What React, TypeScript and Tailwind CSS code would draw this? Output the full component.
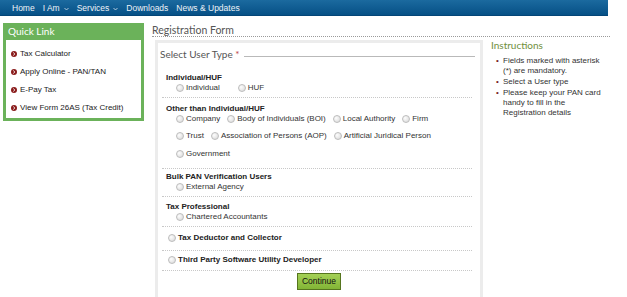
import React from "react";

const Radio = () => (
  <span className="inline-block w-[8px] h-[8px] shrink-0 rounded-full border border-[#bdbdbd] bg-[radial-gradient(circle_at_35%_35%,#fdfdfd,#d6d6d6)]" />
);

const Opt = ({ label, className }: { label: string; className?: string }) => (
  <span className={"flex items-center gap-[2px] " + (className || "")}>
    <Radio />
    <span>{label}</span>
  </span>
);

const Caret = () => (
  <svg width="5" height="4" viewBox="0 0 5 4" className="mt-[2px]">
    <path d="M0.5 1 L2.5 3 L4.5 1" stroke="#d8e4ef" strokeWidth="0.8" fill="none" />
  </svg>
);

const QBullet = () => (
  <svg width="6" height="6" viewBox="0 0 6 6" className="shrink-0">
    <circle cx="3" cy="3" r="3" fill="#8a1c1c" />
    <path d="M2.3 1.6 L3.8 3 L2.3 4.4" stroke="#fff" strokeWidth="1" fill="none" />
  </svg>
);

export default function App() {
  const sans = { fontFamily: '"Liberation Sans", Arial, sans-serif' };
  return (
    <div className="w-[627px] h-[297px] overflow-hidden bg-white text-[#333]" style={sans}>
      {/* nav */}
      <div className="w-[608px] h-[16px] bg-[linear-gradient(#1b6a9f,#065086)] border-b border-[#044577] flex items-center pl-[12px] gap-[8px] text-[8.5px] leading-[10px] text-[#eef3f8]">
        <span>Home</span>
        <span className="flex items-center gap-[4px]">I Am<Caret /></span>
        <span className="flex items-center gap-[4px]">Services<Caret /></span>
        <span>Downloads</span>
        <span>News &amp; Updates</span>
      </div>

      <div className="flex pl-[3px] gap-[8px]">
        {/* quick links */}
        <div className="mt-[7px] w-[141px] h-[98px] border-[3px] border-t-0 border-[#6bb25a] flex flex-col">
          <div className="h-[17px] bg-[#6bb25a] -mx-[3px] px-[5px] flex items-center text-white text-[10px]" style={{ fontFamily: "Lato, sans-serif" }}>
            Quick Link
          </div>
          <div className="pt-[5px] flex flex-col text-[8px] text-[#222]">
            {["Tax Calculator", "Apply Online - PAN/TAN", "E-Pay Tax", "View Form 26AS (Tax Credit)"].map((t) => (
              <div key={t} className="h-[18px] flex items-center gap-[3px] pl-[5px]">
                <QBullet />
                <span>{t}</span>
              </div>
            ))}
          </div>
        </div>

        {/* main */}
        <div className="w-[458px] flex flex-col">
          <div className="mt-[8px] h-[13px] border-b border-dotted border-[#9a9a9a] text-[10.5px] leading-[12px] text-[#555]" style={{ fontFamily: "Lato, sans-serif" }}>
            Registration Form
          </div>
          <div className="flex mt-[3px] gap-[8px]">
            {/* panel */}
            <div className="ml-[3px] w-[328px] h-[270px] border-[3px] border-[#ececec] border-b-0 flex flex-col">
              <div className="flex items-end pl-[2px] pt-[5px] pr-[5px] gap-[4px]">
                <span className="text-[10px] leading-[12px] text-[#555]" style={{ fontFamily: "Lato, sans-serif" }}>
                  Select User Type <span className="text-[#b44]">*</span>
                </span>
                <span className="flex-1 border-b border-[#b9b9b9] mb-[3px]" />
              </div>

              <div className="ml-[4px] mr-[8px] border-b border-dotted border-[#c8c8c8] pt-[13px] pb-[4px]">
                <div className="pl-[4px] font-bold text-[8px] leading-[10px] text-[#222]">Individual/HUF</div>
                <div className="pl-[14px] flex items-center text-[8px] leading-[10px]">
                  <Opt label="Individual" />
                  <Opt label="HUF" className="ml-[18px]" />
                </div>
              </div>

              <div className="ml-[4px] mr-[8px] border-b border-dotted border-[#c8c8c8] pt-[6px] pb-[9px]">
                <div className="pl-[4px] font-bold text-[8px] leading-[10px] text-[#222]">Other than Individual/HUF</div>
                <div className="pl-[14px] flex items-center gap-[7px] text-[8px] leading-[10px]">
                  <Opt label="Company" />
                  <Opt label="Body of Individuals (BOI)" />
                  <Opt label="Local Authority" />
                  <Opt label="Firm" />
                </div>
                <div className="pl-[14px] mt-[7px] flex items-center gap-[7px] text-[8px] leading-[10px]">
                  <Opt label="Trust" />
                  <Opt label="Association of Persons (AOP)" />
                  <Opt label="Artificial Juridical Person" />
                </div>
                <div className="pl-[14px] mt-[8px] flex items-center text-[8px] leading-[10px]">
                  <Opt label="Government" />
                </div>
              </div>

              <div className="ml-[4px] mr-[8px] border-b border-dotted border-[#c8c8c8] pt-[3px] pb-[4px]">
                <div className="pl-[4px] font-bold text-[8px] leading-[10px] text-[#222]">Bulk PAN Verification Users</div>
                <div className="pl-[14px] flex items-center text-[8px] leading-[10px]">
                  <Opt label="External Agency" />
                </div>
              </div>

              <div className="ml-[4px] mr-[8px] border-b border-dotted border-[#c8c8c8] pt-[5px] pb-[4px]">
                <div className="pl-[4px] font-bold text-[8px] leading-[10px] text-[#222]">Tax Professional</div>
                <div className="pl-[14px] flex items-center text-[8px] leading-[10px]">
                  <Opt label="Chartered Accountants" />
                </div>
              </div>

              <div className="ml-[4px] mr-[8px] border-b border-dotted border-[#c8c8c8] pt-[6px] pb-[7px]">
                <div className="pl-[6px] flex items-center font-bold text-[8px] leading-[10px] text-[#222]">
                  <Opt label="Tax Deductor and Collector" />
                </div>
              </div>

              <div className="ml-[4px] mr-[8px] border-b border-dotted border-[#c8c8c8] pt-[4px] pb-[5px]">
                <div className="pl-[6px] flex items-center font-bold text-[8px] leading-[10px] text-[#222]">
                  <Opt label="Third Party Software Utility Developer" />
                </div>
              </div>

              <div className="flex justify-center mt-[2px]">
                <button className="h-[17px] px-[4px] border border-[#56751f] bg-[linear-gradient(#a4d056,#82b536)] text-[8.5px] text-[#111]">
                  Continue
                </button>
              </div>
            </div>

            {/* instructions */}
            <div className="w-[119px] flex flex-col">
              <div className="-mt-[1px] text-[10px] leading-[12px] text-[#6f8f3c]" style={{ fontFamily: "Lato, sans-serif" }}>
                Instructions
              </div>
              <ul className="mt-[5px] flex flex-col gap-[1px] text-[8px] leading-[10px] text-[#333]">
                {[
                  "Fields marked with asterisk (*) are mandatory.",
                  "Select a User type",
                  "Please keep your PAN card handy to fill in the Registration details",
                ].map((t) => (
                  <li key={t} className="flex">
                    <span className="w-[12px] pl-[5px] text-[#7a1f1f]">•</span>
                    <span className="w-[104px]">{t}</span>
                  </li>
                ))}
              </ul>
            </div>
          </div>
        </div>
      </div>
    </div>
  );
}
